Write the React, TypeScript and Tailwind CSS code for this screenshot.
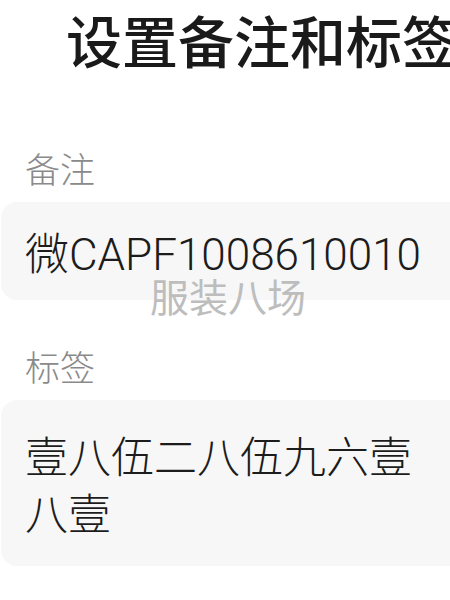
const font = { fontFamily: 'Roboto, "Noto Sans CJK SC", "Noto Sans", sans-serif' };

function Field({ label, children, className }: { label: string; children: React.ReactNode; className?: string }) {
  return (
    <div className={className}>
      <div className="pl-[25px] text-[35px] leading-[40px] font-light text-[#8a8a8a]">{label}</div>
      <div className="mt-[10px] ml-[1px] mr-[-20px] rounded-[16px] bg-[#f7f7f7] pl-[24px] pr-[36px] text-[#1c1c1c]">
        {children}
      </div>
    </div>
  );
}

export default function App() {
  return (
    <div className="relative h-[600px] w-[450px] overflow-hidden bg-white" style={font}>
      <h1 className="whitespace-nowrap pl-[66px] pt-[12px] text-[56px] font-medium leading-[64px] text-[#1a1a1a]">
        设置备注和标签
      </h1>

      <Field label="备注" className="mt-[76px]">
        <div className="pt-[28px] pb-[20px] text-[44px] leading-[50px] font-light whitespace-nowrap">
          微CAPF1008610010
        </div>
      </Field>

      <Field label="标签" className="mt-[50px]">
        <div className="pt-[30px] pb-[22px] text-[43px] leading-[57px] font-light">壹八伍二八伍九六壹八壹</div>
      </Field>

      <div className="absolute left-[150px] top-[277px] text-[39px] leading-[44px] text-[#bdbdbd]">服装八场</div>
    </div>
  );
}
